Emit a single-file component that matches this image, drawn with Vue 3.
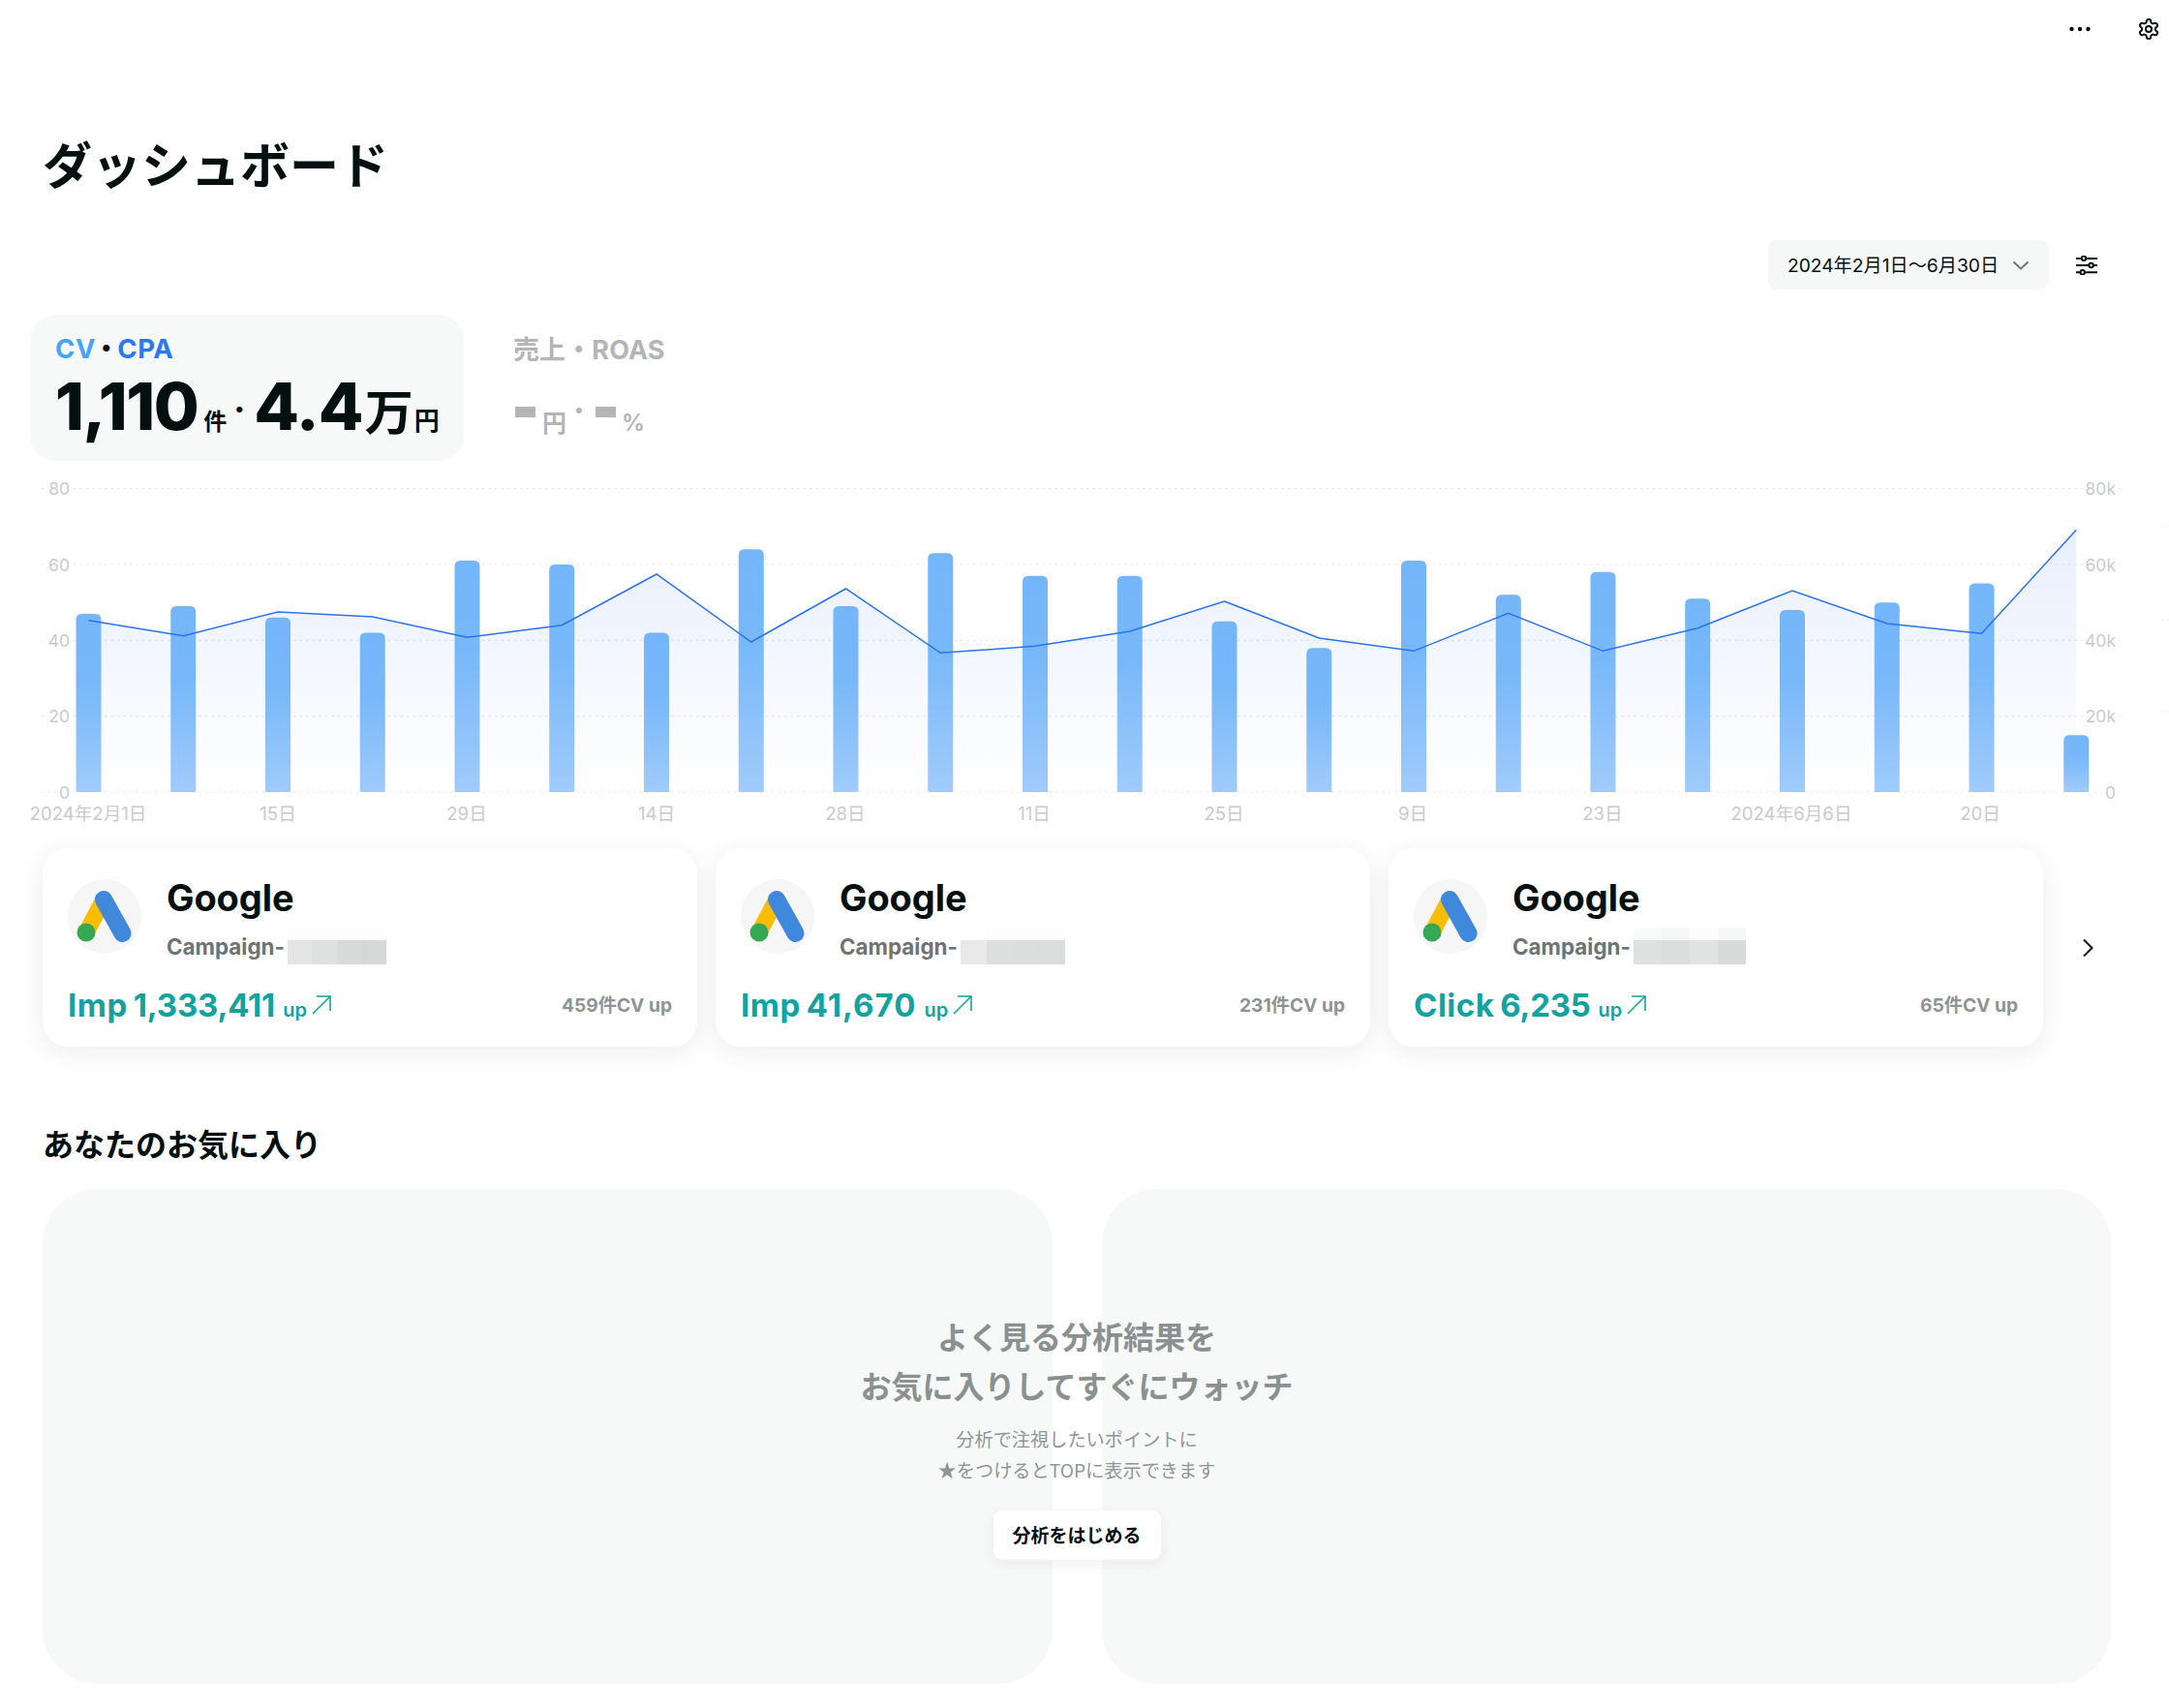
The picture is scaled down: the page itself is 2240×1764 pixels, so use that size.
<script setup>
const barValues = [47,49,46,42,61,60,42,64,49,63,57,57,45,38,61,52,58,51,48,50,55,15]
const lineZoomY = [452,500,426,441,505,467,309,519,354,553,532,486,393,507,547,430,547,476,360,462,493,172]
const x0 = 91.5
const step = 97.75
const baseY = 328
const unit = 3.917
const barW = 26
const bars = barValues.map((v, i) => {
  const cx = x0 + i * step
  const top = baseY - v * unit
  const l = cx - barW / 2
  const r = cx + barW / 2
  return `M${l} ${baseY}V${top + 6}Q${l} ${top} ${l + 6} ${top}H${r - 6}Q${r} ${top} ${r} ${top + 6}V${baseY}Z`
})
const pts = lineZoomY.map((y, i) => [x0 + i * step, y / 3])
const linePath = 'M' + pts.map(p => p.join(' ')).join('L')
const areaPath = linePath + `L${pts[21][0]} ${baseY}L${x0} ${baseY}Z`
const gridRows = [
  { y: 14.67, l: '80', r: '80k' },
  { y: 93, l: '60', r: '60k' },
  { y: 171.33, l: '40', r: '40k' },
  { y: 249.67, l: '20', r: '20k' },
  { y: 328, l: '0', r: '0' },
]
const xLabels = [
  { x: 91, t: '2024年2月1日' }, { x: 287, t: '15日' }, { x: 482, t: '29日' }, { x: 678, t: '14日' },
  { x: 873, t: '28日' }, { x: 1068, t: '11日' }, { x: 1264, t: '25日' }, { x: 1459, t: '9日' },
  { x: 1655, t: '23日' }, { x: 1850, t: '2024年6月6日' }, { x: 2045, t: '20日' },
]
const edgeMarks = [53, 150, 245]
const cards = [
  { metric: 'Imp', value: '1,333,411', cv: '459件CV up', ls: -0.2,
    top: ['#fdfdfd','#fcfdfc','#fdfdfd','#fcfdfc'], bottom: ['#e3e5e4','#dfe1e0','#d9dbda','#d6d8d7'], w: 25.5 },
  { metric: 'Imp', value: '41,670', cv: '231件CV up', ls: 1,
    top: ['#ffffff','#fcfdfc','#fdfdfd','#fdfdfd'], bottom: ['#e8e9e8','#dddfde','#dcdedd','#dbdddc'], w: 27 },
  { metric: 'Click', value: '6,235', cv: '65件CV up', ls: -0.3,
    top: ['#f9fafa','#f5f6f6','#fcfcfc','#f6f8f7'], bottom: ['#dfe1e0','#dcdedd','#e1e3e2','#d9dbda'], w: 29 },
]
</script>

<template>
  <div class="page">
    <header class="topbar">
      <svg class="dots" width="22" height="6" viewBox="0 0 22 6" aria-hidden="true">
        <circle cx="2.5" cy="3" r="2.2" /><circle cx="11" cy="3" r="2.2" /><circle cx="19.5" cy="3" r="2.2" />
      </svg>
      <svg class="gear" width="24" height="24" viewBox="0 0 24 24" aria-hidden="true">
        <path d="M12.22 2h-.44a2 2 0 0 0-2 2v.18a2 2 0 0 1-1 1.73l-.43.25a2 2 0 0 1-2 0l-.15-.08a2 2 0 0 0-2.73.73l-.22.38a2 2 0 0 0 .73 2.73l.15.1a2 2 0 0 1 1 1.72v.51a2 2 0 0 1-1 1.74l-.15.09a2 2 0 0 0-.73 2.73l.22.38a2 2 0 0 0 2.73.73l.15-.08a2 2 0 0 1 2 0l.43.25a2 2 0 0 1 1 1.73V20a2 2 0 0 0 2 2h.44a2 2 0 0 0 2-2v-.18a2 2 0 0 1 1-1.73l.43-.25a2 2 0 0 1 2 0l.15.08a2 2 0 0 0 2.73-.73l.22-.39a2 2 0 0 0-.73-2.73l-.15-.08a2 2 0 0 1-1-1.74v-.5a2 2 0 0 1 1-1.74l.15-.09a2 2 0 0 0 .73-2.73l-.22-.38a2 2 0 0 0-2.73-.73l-.15.08a2 2 0 0 1-2 0l-.43-.25a2 2 0 0 1-1-1.73V4a2 2 0 0 0-2-2z" />
        <circle cx="12" cy="12" r="3" />
      </svg>
    </header>

    <h1 class="title">ダッシュボード</h1>

    <div class="date-row">
      <div class="date-pill">
        <span class="date-text">2024年2月1日〜6月30日</span>
        <svg width="18" height="10" viewBox="0 0 18 10" aria-hidden="true"><path d="M1.5 1.5 9 8.5l7.5-7" /></svg>
      </div>
      <svg class="filter" width="22" height="20" viewBox="0 0 22 20" aria-hidden="true">
        <path d="M0 3h22M0 10h22M0 17.3h22" />
        <circle cx="8" cy="2.8" r="2.2" /><circle cx="15.6" cy="10" r="2.2" /><circle cx="6.7" cy="17.3" r="2.2" />
      </svg>
    </div>

    <section class="tabs">
      <div class="tab active">
        <div class="tab-label"><span class="cv">CV</span><span class="sep">・</span><span class="cpa">CPA</span></div>
        <div class="tab-value">
          <span class="big">1,110</span><span class="u-sm">件</span><span class="mid-dot">・</span><span class="big second">4.4</span><span class="u-man">万</span><span class="u-sm yen">円</span>
        </div>
      </div>
      <div class="tab muted">
        <div class="tab-label">売上・ROAS</div>
        <div class="tab-value empty">
          <i class="bar-dash"></i><span class="u-en">円</span><span class="dot-m"></span><i class="bar-dash"></i><span class="u-pc">%</span>
        </div>
      </div>
    </section>

    <svg class="chart" width="2240" height="370" viewBox="0 0 2240 370" role="img" aria-label="CVとCPAの推移">
      <defs>
        <linearGradient id="areaFill" gradientUnits="userSpaceOnUse" x1="0" y1="57" x2="0" y2="328">
          <stop offset="0" stop-color="#2c6bf0" stop-opacity="0.11" />
          <stop offset="1" stop-color="#2c6bf0" stop-opacity="0" />
        </linearGradient>
        <linearGradient id="barFill" x1="0" y1="0" x2="0" y2="1">
          <stop offset="0" stop-color="#74b6f9" />
          <stop offset="0.4" stop-color="#78b8f9" />
          <stop offset="1" stop-color="#a0cbfb" />
        </linearGradient>
      </defs>
      <line v-for="g in gridRows" :key="'g' + g.y" class="grid" x1="43" x2="2190" :y1="g.y" :y2="g.y" />
      <line v-for="m in edgeMarks" :key="'m' + m" class="grid" x1="2232" x2="2240" :y1="m" :y2="m" />
      <path :d="areaPath" fill="url(#areaFill)" />
      <path v-for="(b, i) in bars" :key="'b' + i" :d="b" fill="url(#barFill)" />
      <path :d="linePath" class="line" />
      <text v-for="g in gridRows" :key="'l' + g.y" class="axis" x="72" :y="g.y + 6.5" text-anchor="end">{{ g.l }}</text>
      <text v-for="g in gridRows" :key="'r' + g.y" class="axis" x="2185" :y="g.y + 6.5" text-anchor="end">{{ g.r }}</text>
      <text v-for="x in xLabels" :key="'x' + x.x" class="axis xlabel" :x="x.x" y="356.5" text-anchor="middle">{{ x.t }}</text>
    </svg>

    <section class="cards">
      <article v-for="(c, i) in cards" :key="i" class="card">
        <div class="card-head">
          <div class="logo">
            <svg width="76" height="77" viewBox="0 0 76 77" aria-hidden="true">
              <path d="M19 55 37 21" stroke="#fbbc04" stroke-width="17" fill="none" />
              <path d="M37 21 56.5 56" stroke="#3f88dc" stroke-width="18" stroke-linecap="round" fill="none" />
              <circle cx="19" cy="55" r="9.5" fill="#34a853" />
            </svg>
          </div>
          <div class="card-name">
            <div class="google">Google</div>
            <div class="campaign">
              <span class="camp-text">Campaign-</span>
              <span class="mosaic">
                <span class="m-row top"><i v-for="(col, k) in c.top" :key="k" :style="{ background: col, width: c.w + 'px' }"></i></span>
                <span class="m-row"><i v-for="(col, k) in c.bottom" :key="k" :style="{ background: col, width: c.w + 'px' }"></i></span>
              </span>
            </div>
          </div>
        </div>
        <div class="card-foot">
          <div class="stat">
            <span class="metric">{{ c.metric }}</span><span class="value" :style="{ letterSpacing: c.ls + 'px' }">{{ c.value }}</span><span class="up">up</span>
            <svg width="20" height="20" viewBox="0 0 20 20" aria-hidden="true"><path d="M1 19 19 1M5 1h14v15" /></svg>
          </div>
          <div class="cv-up">{{ c.cv }}</div>
        </div>
      </article>
      <svg class="next" width="12" height="20" viewBox="0 0 12 20" aria-hidden="true"><path d="M2 1.5 10.5 10 2 18.5" /></svg>
    </section>

    <h2 class="fav-title">あなたのお気に入り</h2>

    <section class="fav">
      <div class="panel"></div>
      <div class="panel"></div>
      <div class="empty-msg">
        <p class="lead">よく見る分析結果を<br />お気に入りしてすぐにウォッチ</p>
        <p class="sub">分析で注視したいポイントに<br />★をつけるとTOPに表示できます</p>
        <button class="start">分析をはじめる</button>
      </div>
    </section>
  </div>
</template>

<style scoped>
.page {
  width: 2240px;
  height: 1764px;
  overflow: hidden;
  background: #fff;
  color: #041010;
  font-family: Inter, "Noto Sans CJK JP", "Noto Sans", sans-serif;
}
.topbar {
  height: 60px;
  display: flex;
  justify-content: flex-end;
  align-items: center;
  gap: 48px;
  padding-right: 9px;
}
.dots { fill: #041010; }
.gear { fill: none; stroke: #041010; stroke-width: 2; }
.title {
  margin: 73px 0 0 44px;
  font-size: 51px;
  line-height: 70px;
  font-weight: 700;
  font-family: "Noto Sans CJK JP", sans-serif;
}
.date-row {
  margin-top: 45px;
  display: flex;
  justify-content: flex-end;
  align-items: center;
  gap: 28px;
  padding-right: 74px;
}
.date-pill {
  width: 290px;
  height: 51px;
  box-sizing: border-box;
  padding: 0 20px;
  border-radius: 10px;
  background: #f6f7f7;
  display: flex;
  align-items: center;
  justify-content: space-between;
  font-size: 19.2px;
  white-space: nowrap;
}
.date-text { position: relative; top: -1px; }
.date-pill svg { fill: none; stroke: #6e7474; stroke-width: 2; }
.filter { stroke: #041010; stroke-width: 2; fill: #fff; }
.tabs {
  margin-top: 26px;
  padding-left: 31px;
  display: flex;
  gap: 25px;
}
.tab {
  height: 151px;
  box-sizing: border-box;
  padding: 20px 27px 0;
  border-radius: 26px;
}
.tab.active { width: 448px; background: #f7f9f8; padding-left: 26px; }
.tab-label {
  font-size: 27.5px;
  line-height: 30px;
  font-weight: 700;
  white-space: nowrap;
}
.active .tab-label { letter-spacing: 0.6px; }
.cv { color: #42a5f5; }
.sep { color: #041010; margin: 0 -3px; }
.cpa { color: #2979f6; }
.tab-value {
  margin-top: 4px;
  display: flex;
  align-items: baseline;
  line-height: 80px;
  white-space: nowrap;
}
.big { font-size: 68px; font-weight: 800; letter-spacing: -1.5px; }
.big.second { letter-spacing: -1px; }
.u-sm { font-size: 24px; font-weight: 700; margin-left: 6px; }
.mid-dot { font-size: 24px; font-weight: 700; margin: 0 3px 0 1px; position: relative; top: -12px; }
.u-man { font-size: 50px; font-weight: 700; margin-left: 2px; }
.yen { font-size: 26px; margin-left: 1px; }
.muted { color: #b2b6b6; padding-top: 22px; }
.muted .tab-label { font-size: 27px; letter-spacing: 0.1px; margin-left: -1px; }
.empty { align-items: flex-start; margin-top: 0; line-height: 1; position: relative; height: 60px; }
.bar-dash { display: block; width: 21px; height: 11px; background: #b2b6b6; margin-top: 43px; }
.empty .bar-dash:first-child { margin-left: 1px; }
.u-en { font-size: 25px; font-weight: 700; margin: 48px 0 0 7px; line-height: 24px; }
.dot-m { width: 6px; height: 6px; border-radius: 50%; background: #b2b6b6; margin: 44px 14px 0 10px; }
.u-pc { font-size: 24px; font-weight: 600; margin: 48px 0 0 6px; line-height: 24px; }
.chart { display: block; margin-top: 14px; }
.grid { stroke: #e9eaea; stroke-width: 1.2; stroke-dasharray: 2.5 4; }
.line { fill: none; stroke: #2a73f0; stroke-width: 1.5; }
.axis {
  font-size: 17.5px;
  fill: #c8cbcb;
  paint-order: stroke;
  stroke: #fff;
  stroke-width: 5px;
  stroke-linejoin: round;
}
.xlabel { font-size: 18.6px; }
.cards {
  margin-top: 16px;
  padding-left: 44px;
  display: flex;
  align-items: center;
  gap: 19px;
}
.card {
  width: 676px;
  height: 205px;
  box-sizing: border-box;
  padding: 32px 26px 0 26px;
  border-radius: 26px;
  background: #fff;
  box-shadow: 0 6px 28px rgba(10, 30, 30, 0.08);
  flex: none;
}
.card-head { display: flex; gap: 26px; height: 77px; }
.logo { width: 76px; height: 77px; border-radius: 50%; background: #f6f6f6; flex: none; }
.logo svg { display: block; }
.google { font-size: 38px; line-height: 46px; font-weight: 700; margin-top: -4px; letter-spacing: -0.1px; }
.campaign {
  display: flex;
  align-items: flex-end;
  gap: 3px;
  margin-top: 1px;
  height: 45px;
  font-size: 22.4px;
  line-height: 34px;
  font-weight: 700;
  color: #6e7474;
}
.camp-text { position: relative; top: -1px; }
.mosaic { display: flex; flex-direction: column; }
.m-row { display: flex; height: 25px; }
.m-row.top { height: 13px; }
.m-row i { display: block; height: 100%; }
.card-foot {
  margin-top: 31px;
  display: flex;
  justify-content: space-between;
  align-items: center;
  height: 44px;
}
.stat { display: flex; align-items: baseline; color: #12a3a0; }
.metric { font-size: 33px; font-weight: 700; letter-spacing: 0.5px; }
.value { font-size: 33px; font-weight: 700; margin-left: 6px; }
.up { font-size: 20px; font-weight: 600; margin-left: 8px; }
.stat svg { fill: none; stroke: #12a3a0; stroke-width: 1.6; margin-left: 5px; align-self: center; }
.cv-up { font-size: 19.2px; font-weight: 700; color: #8e9494; white-space: nowrap; position: relative; top: -1px; }
.next { fill: none; stroke: #041010; stroke-width: 2; margin-left: 21px; flex: none; }
.fav-title {
  margin: 77px 0 0 44px;
  font-size: 32px;
  line-height: 44px;
  font-weight: 700;
  font-family: "Noto Sans CJK JP", sans-serif;
}
.fav {
  position: relative;
  margin-top: 26px;
  padding-left: 44px;
  display: grid;
  grid-template-columns: 1043px 1042px;
  gap: 51px;
}
.panel { height: 511px; border-radius: 56px; background: #f7f9f8; }
.empty-msg {
  position: absolute;
  left: 44px;
  width: 2136px;
  top: 126px;
  display: flex;
  flex-direction: column;
  align-items: center;
  font-family: "Noto Sans CJK JP", sans-serif;
  text-align: center;
}
.lead { margin: 0; font-size: 32px; line-height: 51px; font-weight: 700; color: #8a9190; }
.sub { margin: 14px 0 0; font-size: 19.2px; line-height: 32px; color: #8f9695; }
.start {
  margin-top: 26px;
  width: 173px;
  height: 51px;
  border: none;
  border-radius: 9px;
  background: #fff;
  box-shadow: 0 4px 14px rgba(10, 30, 30, 0.07);
  font: 700 19px "Noto Sans CJK JP", sans-serif;
  color: #041010;
  padding: 0 0 2px;
}
</style>

<style>
html, body { margin: 0; background: #fff; }
</style>
